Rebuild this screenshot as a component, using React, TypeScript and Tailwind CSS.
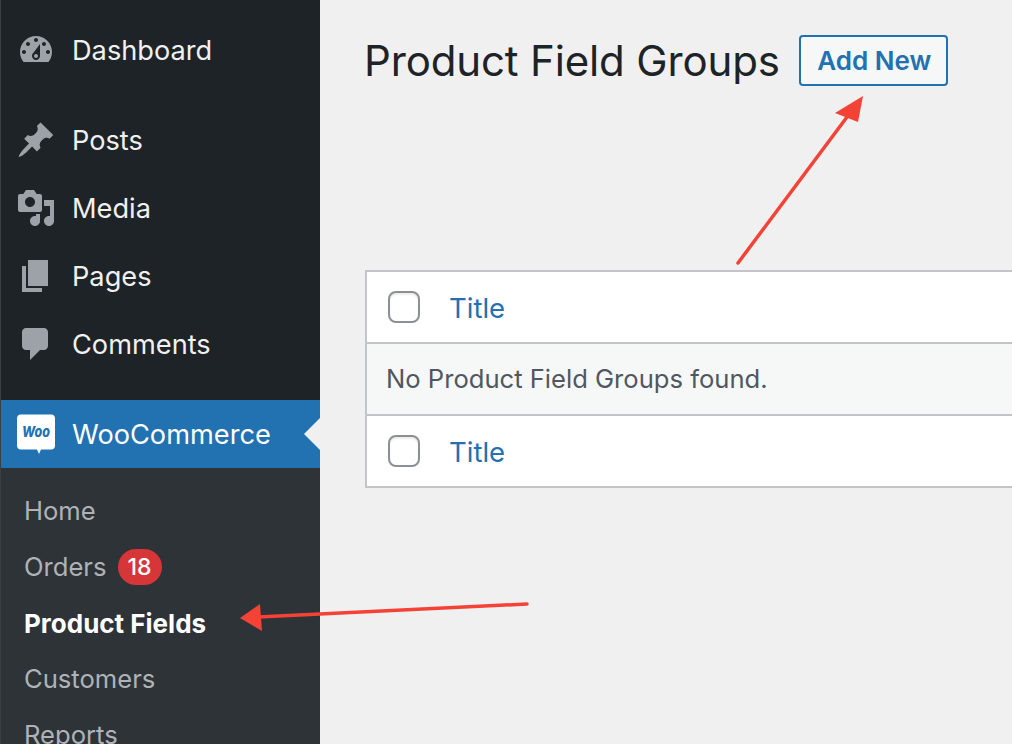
// WordPress admin: Product Field Groups empty list, with two red callout arrows.

const FONT = "font-['Inter','Noto_Sans',sans-serif]";

const icons = {
  dashboard:
    'M3.76 16h12.48c1.1-1.37 1.76-3.11 1.76-5 0-4.42-3.58-8-8-8s-8 3.58-8 8c0 1.89.66 3.63 1.76 5zM10 4c.55 0 1 .45 1 1s-.45 1-1 1-1-.45-1-1 .45-1 1-1zM6 6c.55 0 1 .45 1 1s-.45 1-1 1-1-.45-1-1 .45-1 1-1zm8 0c.55 0 1 .45 1 1s-.45 1-1 1-1-.45-1-1 .45-1 1-1zm-5.37 5.55L12 7v6c0 1.1-.9 2-2 2s-2-.9-2-2c0-.57.24-1.08.63-1.45zM4 10c.55 0 1 .45 1 1s-.45 1-1 1-1-.45-1-1 .45-1 1-1zm12 0c.55 0 1 .45 1 1s-.45 1-1 1-1-.45-1-1 .45-1 1-1zm-5 3c0-.55-.45-1-1-1s-1 .45-1 1 .45 1 1 1 1-.45 1-1z',
  posts:
    'M10.44 3.02l1.82-1.82 6.36 6.35-1.83 1.82c-1.05-.68-2.48-.57-3.41.36l-.75.75c-.92.93-1.04 2.35-.35 3.41l-1.83 1.82-2.41-2.41-2.8 2.79c-.42.42-3.38 2.71-3.8 2.29s1.86-3.39 2.28-3.81l2.79-2.79L4.1 9.36l1.83-1.82c1.05.69 2.48.57 3.4-.36l.75-.75c.93-.92 1.05-2.35.36-3.41z',
  media:
    'M13 11V4c0-.55-.45-1-1-1h-1.67L9 1H5L3.67 3H2c-.55 0-1 .45-1 1v7c0 .55.45 1 1 1h10c.55 0 1-.45 1-1zM7 4.5c1.38 0 2.5 1.12 2.5 2.5S8.38 9.5 7 9.5 4.5 8.38 4.5 7 5.62 4.5 7 4.5zM14 6h5v10.5c0 1.38-1.12 2.5-2.5 2.5S14 17.88 14 16.5s1.12-2.5 2.5-2.5c.17 0 .34.02.5.05V9h-3V6zm-4 8.05V13h2v3.5c0 1.38-1.12 2.5-2.5 2.5S7 17.88 7 16.5 8.12 14 9.5 14c.17 0 .34.02.5.05z',
  pages: 'M6 15V2h10v13H6zm-1 1h8v2H3V5h2v11z',
  comments:
    'M5 2h9c1.1 0 2 .9 2 2v7c0 1.1-.9 2-2 2h-2l-5 5v-5H5c-1.1 0-2-.9-2-2V4c0-1.1.9-2 2-2z',
};

function MenuItem({ icon, label }: { icon: string; label: string }) {
  return (
    <div className="flex h-[68px] shrink-0 items-center">
      <svg viewBox="0 0 20 20" className="ml-[15px] h-10 w-10 fill-[#9ca2a7]" fillRule="evenodd">
        <path d={icon} />
      </svg>
      <span className="ml-4 pt-0.5 text-[27.2px] text-[#f0f0f1]">{label}</span>
    </div>
  );
}

function WooItem() {
  return (
    <div className="relative flex h-[68px] shrink-0 items-center bg-[#2271b1]">
      <svg viewBox="0 0 40 40" className="ml-[15px] h-10 w-10">
        <path
          d="M5 0.5h30a4 4 0 0 1 4 4v27a4 4 0 0 1-4 4H25l-2 4.5-2-4.5H5a4 4 0 0 1-4-4v-27a4 4 0 0 1 4-4z"
          fill="#fff"
        />
        <text
          x="20"
          y="23"
          textAnchor="middle"
          fill="#2271b1"
          fontSize="15"
          fontWeight="800"
          fontStyle="italic"
          textLength="28"
          lengthAdjust="spacingAndGlyphs"
          fontFamily="Inter, sans-serif"
        >
          Woo
        </text>
      </svg>
      <span className="ml-4 pt-0.5 text-[27.2px] text-white">WooCommerce</span>
      <div className="absolute right-0 top-[18px] h-0 w-0 border-y-[16px] border-r-[16px] border-y-transparent border-r-[#f0f0f1]" />
    </div>
  );
}

function SubItem({ label, badge, current }: { label: string; badge?: string; current?: boolean }) {
  return (
    <div
      className={`flex h-14 shrink-0 items-center pl-[23px] ${
        current ? 'text-[26px] font-bold text-white' : 'text-[25.6px] text-[#aeb3b8]'
      }`}
    >
      {label}
      {badge && (
        <span className="ml-[11px] flex h-9 w-11 items-center justify-center rounded-full bg-[#d63638] text-[23px] font-medium text-white">
          {badge}
        </span>
      )}
    </div>
  );
}

function TitleRow() {
  return (
    <div className="flex h-[70px] items-center bg-white pl-[21px]">
      <input
        type="checkbox"
        className="h-8 w-8 appearance-none rounded-lg border-2 border-[#8c8f94] bg-white shadow-[inset_0_2px_2px_rgba(0,0,0,0.08)]"
      />
      <a className="ml-[29px] pt-[3px] text-[27.5px] text-[#2271b1]">Title</a>
    </div>
  );
}

function Arrows() {
  return (
    <svg className="pointer-events-none absolute inset-0 h-full w-full" viewBox="0 0 1012 744">
      <g stroke="#f44336" strokeWidth="3.5" strokeLinecap="round" fill="#f44336">
        <line x1="738" y1="263" x2="850" y2="113" />
        <line x1="527" y1="604" x2="258" y2="617" />
      </g>
      <polygon points="863,96 835,113 858,122" fill="#f44336" />
      <polygon points="240,618 260,604 262,631" fill="#f44336" />
    </svg>
  );
}

export default function App() {
  return (
    <div className={`relative flex h-[744px] w-[1012px] overflow-hidden bg-[#f0f0f1] ${FONT}`}>
      <aside className="flex w-80 shrink-0 flex-col overflow-hidden border-l border-l-[#3a3f44] bg-[#1d2327] pt-4">
        <MenuItem icon={icons.dashboard} label="Dashboard" />
        <div className="mt-[22px] shrink-0">
          <MenuItem icon={icons.posts} label="Posts" />
          <MenuItem icon={icons.media} label="Media" />
          <MenuItem icon={icons.pages} label="Pages" />
          <MenuItem icon={icons.comments} label="Comments" />
        </div>
        <div className="mt-[22px] shrink-0">
          <WooItem />
        </div>
        <div className="flex shrink-0 flex-col bg-[#2d3337] pt-[15px] pb-4">
          <SubItem label="Home" />
          <SubItem label="Orders" badge="18" />
          <SubItem label="Product Fields" current />
          <SubItem label="Customers" />
          <SubItem label="Reports" />
        </div>
      </aside>

      <main className="flex-1 pl-[45px]">
        <div className="flex items-start pt-[35px]">
          <h1 className="-ml-px flex h-[51px] items-center text-[42px] font-normal tracking-[-0.15px] text-[#1d2327]">
            Product Field Groups
          </h1>
          <button className="ml-[19px] h-[51px] w-[149px] rounded-[4px] border-2 border-[#2271b1] bg-[#f6f7f7] pl-0.5 text-[26px] font-semibold text-[#2271b1]">
            Add New
          </button>
        </div>
        <div className="mt-[184px] border-y-2 border-l-2 border-[#c3c4c7]">
          <TitleRow />
          <div className="flex h-[74px] items-center border-y-2 border-[#c3c4c7] bg-[#f6f7f7] pl-[19px] text-[25.6px] text-[#50575e]">
            No Product Field Groups found.
          </div>
          <TitleRow />
        </div>
      </main>

      <Arrows />
    </div>
  );
}
